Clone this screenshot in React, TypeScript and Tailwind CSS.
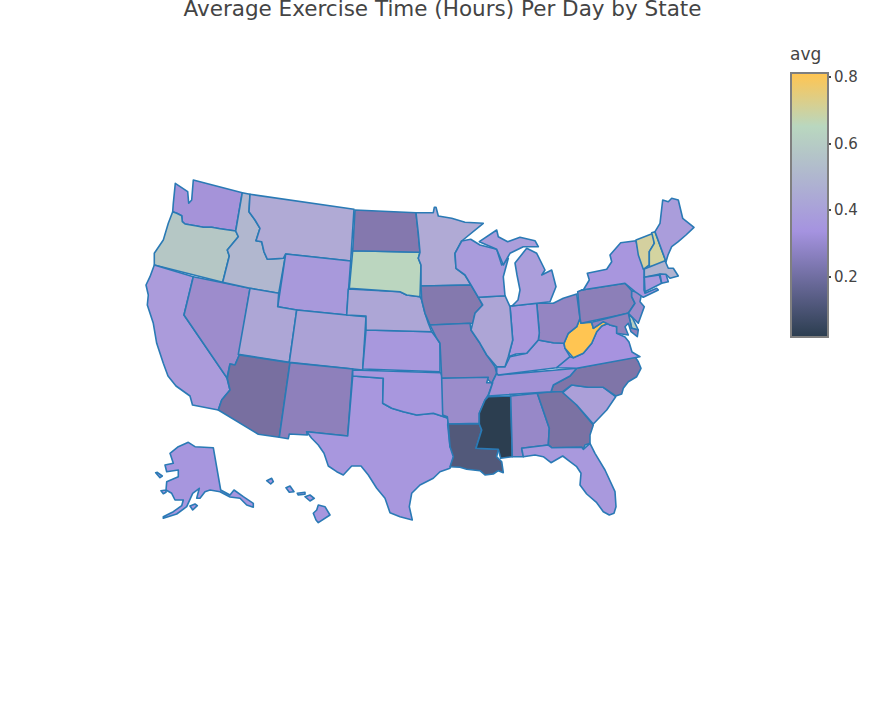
const states = [
  { id: "WA", fill: "#a593d9", d: "M193.3 180 242.3 192.7 235.7 231 220 228.7 211.7 227.3 203.3 227.3 196.7 226 185 224 182.3 221.7 181.7 215.7 176.7 213.3 172.7 211.7 173.3 203.3 175.3 183.3 187.7 191.7 188.7 203.3 191.7 200Z" },
  { id: "OR", fill: "#b5c7c5", d: "M172.7 211.7 176.7 213.3 181.7 215.7 182.3 221.7 185 224 196.7 226 203.3 227.3 211.7 227.3 220 228.7 235.7 231 238.3 236.7 227.3 250 229.3 256 222.7 282.3 154.3 265 154.3 253.3 163.3 240 168.3 223.3Z" },
  { id: "CA", fill: "#ab9bdb", d: "M154.3 265 193.3 276.7 184 315 226.7 377.3 230 390 221.7 400 218.3 410 192.5 405 190 396 176 386 168 376 163.3 363.3 156.7 343.3 153.3 323.3 147.3 305 148.3 295 146 285 150 276.7Z" },
  { id: "NV", fill: "#9d8ccc", d: "M193.3 276.7 250 288.3 239.3 355 235 365 230 364 227 378 184 315Z" },
  { id: "ID", fill: "#b1b7cf", d: "M242.3 192.7 250 194.3 249 211.7 255 220 260 228.3 256 240.7 261.7 241.7 264 251.7 267.3 259.3 283.3 258.3 285.7 254 278.7 293.3 250 288.3 222.7 282.3 229.3 256 227.3 250 238.3 236.7 235.7 231Z" },
  { id: "MT", fill: "#b0aad5", d: "M250 194.3 354 209.3 350.7 261 285.7 254 283.3 258.3 267.3 259.3 264 251.7 261.7 241.7 256 240.7 260 228.3 255 220 249 211.7Z" },
  { id: "WY", fill: "#a899db", d: "M285.7 254 350.7 261 346.7 315 296.7 310 277.7 306.7Z" },
  { id: "UT", fill: "#ada6d6", d: "M250 288.3 278.7 293.3 277.7 306.7 296.7 310 289.3 362.3 238.3 354.3Z" },
  { id: "CO", fill: "#aba2d6", d: "M296.7 310 346.7 315 366 316.7 362.7 370 289.3 362.3Z" },
  { id: "AZ", fill: "#786fa0", d: "M239.3 355 290 362.7 279.3 437.3 258.3 434.3 218.3 410 221.7 400 230 390 227.3 378.3 230 364 235 365Z" },
  { id: "NM", fill: "#8e80bb", d: "M290 362.7 352.7 369 347.7 436 306.7 431.7 307.3 435 289.3 434 288.3 438.7 279.3 437.3Z" },
  { id: "TX", fill: "#a897de", d: "M352.7 376 383.3 378.3 382.7 403.3 391.7 408.3 403.3 411.7 416.7 415 433.3 413.3 448.3 418.3 447.7 425 450 446.7 455 453.3 450 468.3 440 471.7 433.3 478.3 420 485 411.7 493.3 409.3 506.7 412.3 520 400 516.7 390 512.7 385 498.3 376.7 488.3 368.3 475 361 466 351.7 466 343.3 475 336.7 471.7 328.3 466 324 453.3 318.3 445 311.7 438.3 306.7 431.7 347.7 436Z" },
  { id: "OK", fill: "#a897de", d: "M352.7 370 440.7 372.7 442.7 378 443.3 415 448.3 418.3 433.3 413.3 416.7 415 403.3 411.7 391.7 408.3 382.7 403.3 383.3 378.3 352.7 376Z" },
  { id: "KS", fill: "#a898dd", d: "M366 330 431.7 331.7 436.7 338.3 440 343.3 440 371.7 362.7 369Z" },
  { id: "NE", fill: "#ada6d6", d: "M348.3 289 400 291.7 406.7 295 420 296.7 421.7 300 425 313.3 428.3 323.3 431.7 331.7 366 330 366 316 346.7 315Z" },
  { id: "SD", fill: "#bbd6bf", d: "M352.7 250.7 420 252.3 418.3 258.3 421 265 420 296.7 406.7 295 400 291.7 349.3 288.3Z" },
  { id: "ND", fill: "#8478ae", d: "M355 210 416 212.7 418.3 233.3 420 252.3 352.7 250.7Z" },
  { id: "MN", fill: "#b0aad5", d: "M416 212.7 433.3 212.7 434.3 207.3 436 207.3 438.3 216 451.7 218.3 465 222.3 483.3 223.3 461.7 241 455 253.3 456 268.3 465 275 471 285 421 286 421 265 418.3 258.3 420 252.3 418.3 233.3Z" },
  { id: "IA", fill: "#8479ae", d: "M421 286 471 285 478.3 297.3 482.7 305 475 313.3 473.3 323.3 430 325 425 313.3 421.7 300Z" },
  { id: "MO", fill: "#8d80ba", d: "M430 325 470 323.3 471 330 480 343.3 486.7 355 495 366.7 496.7 373.3 491.7 383.3 486.7 378.3 441.7 378.3 440 343.3 436.7 338.3Z" },
  { id: "AR", fill: "#9b8ccb", d: "M441.7 378.3 488.3 377.3 486.7 382.7 492.7 382.7 488.3 395 485 400 479.3 413.3 479.3 423.3 448.3 424 447.3 416.7 442.7 415Z" },
  { id: "LA", fill: "#52597a", d: "M448.3 424 479.3 424 481.7 430 476 448.3 498.3 449.3 496.7 456.7 501.7 461.7 503.3 472.7 498.3 470.7 493.3 474 485 475 480 470.7 466.7 469.3 460 467.3 450 466.7 453.3 456.7 450 446.7Z" },
  { id: "MS", fill: "#2c3e50", d: "M488.3 396.7 510.7 396 512.3 456.7 500.7 458.3 498.3 449.3 476 448.3 481.7 430 479.3 424 479.3 413.3 485 400Z" },
  { id: "AL", fill: "#9788c8", d: "M510.7 396 537.3 393.3 549.3 428.3 548.3 445 521.7 448.3 523.3 456.7 512.3 456.7Z" },
  { id: "GA", fill: "#7b72a3", d: "M537.3 393.3 561.7 390.7 576.7 405 593.3 425 590 435 590 443.3 585 445 583.3 449.3 581.7 447.3 551.7 447.7 548.3 445 549.3 428.3Z" },
  { id: "FL", fill: "#a999dd", d: "M521.7 448.3 548.3 445 551.7 447.7 581.7 447.3 583.3 449.3 590 443.3 595 453.3 605 470 615 491.7 616 506.7 614 513.3 609.3 515 603.3 511.7 596.7 502.7 586.7 494 580 485 581 473.3 576.7 466.7 570 461.7 562.7 456 551 462.7 543.3 456.7 535 455 523.3 456.7Z" },
  { id: "SC", fill: "#ab9fd8", d: "M562.7 392.7 571.7 385 588.3 387.3 603.3 387.3 615.7 396.7 606.7 410 593.3 424 576.7 405Z" },
  { id: "NC", fill: "#7f75a8", d: "M576.7 368.3 635 356.7 638.3 361.7 641 368.3 636.7 376.7 628.3 381.7 623.3 388.3 621.7 394 615.7 396 603.3 387.3 588.3 387.3 571.7 385 562.7 391.7 551 391.7 553.3 385 570 376Z" },
  { id: "TN", fill: "#a292d6", d: "M496.7 373.3 498.3 375 576.7 368.3 570 376 553.3 385 551 391.7 488.3 396 492.7 382.7 491.7 383.3Z" },
  { id: "KY", fill: "#a99bdc", d: "M498.3 375 496.7 373.3 496.7 366.7 505 366.7 510 356.7 526.7 353.3 538.3 340 553.3 342.7 564 343.3 565 348.3 570 356.7 561.7 365 556.7 367.7Z" },
  { id: "VA", fill: "#a793df", d: "M556.7 367.7 570 356.7 573.3 357.7 583.3 353.3 591.7 343.3 596.7 331.7 601.7 326 608.3 323.3 610 325 616.7 326.7 616.7 333.3 625 337 629 342 632 352 640 356.7 576.7 368.3Z" },
  { id: "WV", fill: "#ffc552", d: "M580 318.3 581 323.3 591.7 322.3 593.3 328.3 603.3 321.7 608.3 323.3 601.7 326 596.7 331.7 591.7 343.3 583.3 353.3 573.3 357.7 565 348.3 564 343.3 568.3 333.3 576.7 326.7Z" },
  { id: "OH", fill: "#9485c2", d: "M536.7 303.3 553.3 303.3 563.3 298.3 576.7 294 580 318.3 576.7 326.7 568.3 333.3 564 343.3 553.3 342.7 538.3 340 539.3 333Z" },
  { id: "IN", fill: "#a997dd", d: "M510 306 536.7 303.3 539.3 333 538.3 340 526.7 353.3 516 354 508.3 356.7 512.7 340Z" },
  { id: "IL", fill: "#ada5d6", d: "M478.3 297.3 505 295.7 510 306.7 512.7 340 508.3 356.7 505 366.7 496.7 366.7 486.7 355 480 343.3 471 330 475 313.3 482.7 305Z" },
  { id: "WI", fill: "#a99bdc", d: "M461.7 241 470.7 239.3 480 245 496.7 249.3 501.7 265 508.3 258.3 503.3 276.7 505 295.7 478.3 297.3 471 285 465 275 456 268.3 455 253.3Z" },
  { id: "MIU", fill: "#ab9edb", d: "M479.3 241.7 496.7 230 498.3 236.7 507.7 241.7 520 237.3 535 240.7 538.3 246.7 523.3 246.7 510 253.3 503.3 265 496.7 249.3Z" },
  { id: "MIL", fill: "#ab9edb", d: "M526.7 248.3 536.7 253.3 545 270 541.7 275 551.7 270 556 286.7 550 301.7 512 306 518 300 520 290 517 275 515 263Z" },
  { id: "PA", fill: "#8c7fb8", d: "M577.7 291.7 581.7 290 625 283.3 631.7 290.7 631.7 296.7 635 303.3 628.3 313.3 581 323.3 580 318.3Z" },
  { id: "NJ", fill: "#9b8ccb", d: "M631.7 290.7 641.7 293.3 640 301.7 644.3 306.7 638.3 323.3 628.3 313.3 635 303.3 631.7 296.7Z" },
  { id: "DE", fill: "#b8cfc3", d: "M628.3 314 632.7 318.3 638.3 330 631.7 328.3Z" },
  { id: "MD", fill: "#9082bc", d: "M591.7 322.3 628.3 313 631.7 328.3 638.3 330 637.3 336.7 631 331.7 628.3 323.3 625 326.7 628.3 335 616.7 333.3 616.7 326.7 610 325 603.3 321.7 593.3 328.3Z" },
  { id: "NY", fill: "#a896de", d: "M583.3 290 589.3 280 587.3 273.3 606.7 269.3 611.7 261.7 610 255 620.7 242.7 636 240.7 640 256.7 644.3 268.3 644 290 645 293.3 656.7 288.3 658.3 290 643.3 297.3 635 291.7 625 283.3 581.7 290Z" },
  { id: "VT", fill: "#d4d09f", d: "M636 240 653.3 233.3 654.3 243.3 649.3 251.7 649.3 265 643.3 269.3 638.3 255Z" },
  { id: "NH", fill: "#d4d4a0", d: "M651.7 232.7 655 231.7 666 261.7 663.3 265 649.3 266.7 649.3 251.7 654.3 243.3Z" },
  { id: "ME", fill: "#aa9ddb", d: "M655 231.7 660 223.3 662.7 200 668.3 201.7 671.7 198.3 678.3 200 682.7 218.3 694 227.3 686 235 678.3 241.7 671.7 246.7 668 255 666 261.7Z" },
  { id: "MA", fill: "#b1b3d0", d: "M644.3 269 665 260.7 668.3 268.3 673.3 268.3 678.3 276 670 278.3 666.7 275 660 274 644.3 277.3Z" },
  { id: "CT", fill: "#a999dd", d: "M644.3 277.3 659.3 275 661.7 283.3 645 291.7Z" },
  { id: "RI", fill: "#a999dd", d: "M660 274.3 666 274.3 668.3 281.7 661.7 283.3Z" },
  { id: "AK", fill: "#a796de", d: "M213.3 447.7 220.7 490 230 495 234 490 243.3 496.7 253.3 503.3 253.3 507.3 246.7 505 240 498.3 230 497 220 491.7 210 490 205 491.7 200 498.3 196.7 498.3 199.3 488.3 192.7 493.3 186.7 506.7 176.7 514 163.3 518.3 163.3 516.7 173.3 511.7 181.7 505.7 183.3 500 175 500 171.7 493.3 166 490 166.7 481.7 178.3 476.7 178.3 470 166.7 471.7 165 465 173.3 463.3 170 453.3 178.3 446.7 188.3 442.3 195 446.7Z M190 506 195 504 197.3 505.7 192.7 510Z M161 490.7 166 490 166 492.3 163.3 493.7Z M155.7 472.7 157.3 472.3 162.3 476 160 477.7Z" },
  { id: "HI", fill: "#a796de", d: "M266.7 480.7 271.7 478.3 273.3 481.7 270.7 484Z M286 487.7 290 486 294 491.7 289.3 492.3Z M297.3 493.3 305 492.3 305 494.3 298.3 495Z M305 496.7 310 495 314.3 498.3 310 501Z M318.3 505 325 506.7 330 515 318.3 522.7 316 520 313.3 513.3 316.7 510Z" },
];

const ticks = ["0.8", "0.6", "0.4", "0.2"];

export default function App() {
  return (
    <div className="h-[715px] w-[882px] overflow-hidden bg-white font-['DejaVu_Sans',sans-serif] text-[#444444]">
      <div className="flex h-[30px] items-start justify-center pl-[3px] text-[21.5px] leading-[17px]">
        Average Exercise Time (Hours) Per Day by State
      </div>

      <div className="flex items-start">
        <svg
          className="ml-[140px] mt-[140px] shrink-0"
          width="560"
          height="360"
          viewBox="140 170 560 360"
        >
          {states.map((s) => (
            <path
              key={s.id}
              d={s.d}
              fill={s.fill}
              stroke="#2a7ab5"
              strokeWidth="1.6"
              strokeLinejoin="round"
            />
          ))}
        </svg>

        <div className="ml-[90px] mt-[14px] flex w-[70px] flex-col">
          <div className="mb-[8px] h-[20px] text-[17px] leading-[20px]">avg</div>
          <div className="flex items-start">
            <div className="h-[266px] w-[39px] shrink-0 border-2 border-[#7f7f7f] bg-[linear-gradient(to_top,#2c3e50_0%,#a593e0_40%,#b9d7bf_80%,#ffc552_100%)]" />
            <div className="-mt-[5px] flex flex-col gap-[46.67px]">
              {ticks.map((t) => (
                <div key={t} className="flex h-[20px] items-center text-[15px] leading-[20px]">
                  <span className="mr-[3px] h-[2px] w-[2px] bg-[#444444]" />
                  {t}
                </div>
              ))}
            </div>
          </div>
        </div>
      </div>
    </div>
  );
}
